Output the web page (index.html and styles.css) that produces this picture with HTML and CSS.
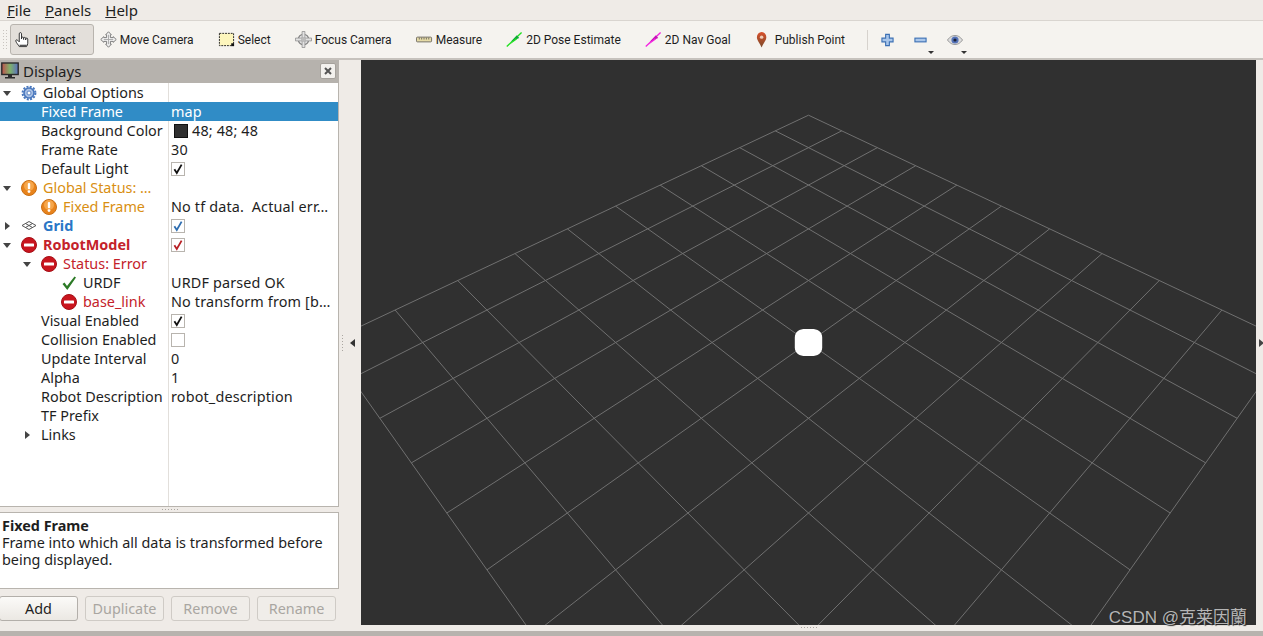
FILE: index.html
```html
<!DOCTYPE html>
<html lang="en">
<head>
    <meta charset="UTF-8">
    <title>RViz</title>
    <link rel="stylesheet" href="styles.css">
</head>
<body>
    <svg class="icon-defs" width="0" height="0">
        <symbol id="i-warn" viewBox="0 0 16 16">
            <circle cx="8" cy="8" r="7.5" fill="#e8831c" stroke="#c96f14" stroke-width="1"/>
            <circle cx="8" cy="6" r="5" fill="#f6a64a"/>
            <rect x="6.8" y="3" width="2.4" height="6.2" rx="1" fill="#fff"/>
            <circle cx="8" cy="11.6" r="1.4" fill="#fff"/>
        </symbol>
        <symbol id="i-error" viewBox="0 0 16 16">
            <circle cx="8" cy="8" r="7.5" fill="#c9151e" stroke="#a50f16" stroke-width="1"/>
            <rect x="3" y="6.4" width="10" height="3.2" rx=".6" fill="#fff"/>
        </symbol>
        <symbol id="i-gear" viewBox="0 0 16 16">
            <circle cx="8" cy="8" r="5" fill="#a9c0e4" stroke="#4a78bd" stroke-width="1.6"/>
            <circle cx="8" cy="8" r="6.4" fill="none" stroke="#4a78bd" stroke-width="2" stroke-dasharray="2 1.35"/>
            <circle cx="8" cy="8" r="2" fill="#fff" stroke="#5f86c4"/>
        </symbol>
        <symbol id="i-grid" viewBox="0 0 16 16">
            <path d="M1 7.500 8 3.500l7 4-7 4ZM4.500 5.500 11.500 9.500M11.500 5.500 4.500 9.500" fill="#fff" stroke="#555" stroke-width="1"/>
        </symbol>
        <symbol id="i-ok" viewBox="0 0 16 16">
            <path d="M1.500 9 3.500 7.500 6 11 13.500 1.500 15 2.500 6.300 15Z" fill="#2c7a26"/>
        </symbol>
        <symbol id="i-tick" viewBox="0 0 12 12">
            <path d="M2.400 6.200 4.800 10 9.600 1.600" fill="none" stroke="currentColor" stroke-width="1.800"/>
        </symbol>
    </svg>

    <div class="app">
        <div class="menubar">
            <span class="menu-item"><u>F</u>ile</span>
            <span class="menu-item"><u>P</u>anels</span>
            <span class="menu-item"><u>H</u>elp</span>
        </div>

        <div class="toolbar">
            <div class="grip"></div>
            <div class="tool tool-active">
                <svg class="tool-icon" viewBox="0 0 18 18"><path d="M4.500 16.500C3.500 14.500 1.200 12.500 .8 10.500c-.2-1.200 1.200-1.500 2-.7L4.500 11.500V3c0-1.800 2.400-1.800 2.400 0V8.500V7.500c0-1.400 2.200-1.400 2.200 0V9V7.800c0-1.400 2.200-1.400 2.200 0V9.500V8.500c0-1.300 2.200-1.300 2.200 0V13c0 1.500-.7 2.500-1.300 3.500Z" fill="#fff" stroke="#2a2a2a" stroke-width="1"/><path d="M4.800 14.500H12.500V16.500H4.800Z" fill="#555"/></svg>
                <span>Interact</span>
            </div>
            <div class="tool">
                <svg class="tool-icon" viewBox="0 0 18 18"><path d="M9 .8 12 4H11V7H14V6L17.200 9 14 12V11H11V14H12L9 17.200 6 14H7V11H4V12L.8 9 4 6V7H7V4H6Z" fill="#f1f1f1" stroke="#777" stroke-width="1"/><path d="M9 4V14M4 9H14" stroke="#aaa" stroke-width="1"/></svg>
                <span>Move Camera</span>
            </div>
            <div class="tool">
                <svg class="tool-icon" viewBox="0 0 18 18"><rect x="1.500" y="2.500" width="15" height="13" fill="#fdf6bd" stroke="#222" stroke-width="1" stroke-dasharray="2 1"/><rect x="14" y="13" width="3" height="3" fill="#111"/></svg>
                <span>Select</span>
            </div>
            <div class="tool">
                <svg class="tool-icon" viewBox="0 0 18 18"><circle cx="9" cy="9" r="5.500" fill="#eee" stroke="#888" stroke-width="1.400"/><path d="M7.500 .5H10.500V17.500H7.500ZM.5 7.500V10.500H17.500V7.500Z" fill="#e2e2e2" stroke="#8c8c8c" stroke-width=".8"/><circle cx="9" cy="9" r="2.500" fill="#bbb"/></svg>
                <span>Focus Camera</span>
            </div>
            <div class="tool">
                <svg class="tool-icon" viewBox="0 0 18 18"><rect x=".5" y="6.500" width="16" height="5" rx="1" fill="#e6dba6" stroke="#6e6a60"/><path d="M3.500 7V9M6 7V9M8.500 7V9M11 7V9M13.500 7V9" stroke="#6e6a60"/></svg>
                <span>Measure</span>
            </div>
            <div class="tool">
                <svg class="tool-icon" viewBox="0 0 18 18"><path d="M.8 16.500 16.500 1.500" stroke="#1fe01f" stroke-width="1.400"/><path d="M5 11.500 11.500 4.500 14 7.500Z" fill="#10a83a"/><path d="M3.500 14.500 10.500 7.500 11.500 9Z" fill="#1fe01f"/></svg>
                <span>2D Pose Estimate</span>
            </div>
            <div class="tool">
                <svg class="tool-icon" viewBox="0 0 18 18"><path d="M.8 16.500 16.500 1.500" stroke="#f41fe0" stroke-width="1.400"/><path d="M5 11.500 11.500 4.500 14 7.500Z" fill="#c415b5"/><path d="M3.500 14.500 10.500 7.500 11.500 9Z" fill="#f41fe0"/></svg>
                <span>2D Nav Goal</span>
            </div>
            <div class="tool tool-pin">
                <svg class="tool-icon" viewBox="0 0 18 18">
                    <defs><linearGradient id="pin-fill" x1="0" x2="0" y1="0" y2="1"><stop offset="0" stop-color="#d9512c"/><stop offset="1" stop-color="#7a4a2a"/></linearGradient></defs>
                    <path d="M7 17.500C5.200 12.500 2 10 2 6.500a5 5.500 0 0 1 10 0C12 10 8.800 12.500 7 17.500Z" fill="url(#pin-fill)"/><circle cx="7" cy="6.500" r="1.800" fill="#f0cdb8"/>
                </svg>
                <span>Publish Point</span>
            </div>
            <div class="tool-sep"></div>
            <div class="mini-tool">
                <svg class="mini-icon" viewBox="0 0 14 14"><path d="M5 1H9V5H13V9H9V13H5V9H1V5H5Z" fill="#a9c6ea" stroke="#3c70b4" stroke-width="1.200"/></svg>
            </div>
            <div class="mini-tool has-caret">
                <svg class="mini-icon" viewBox="0 0 14 14"><rect x="1" y="5" width="12" height="4" fill="#a9c6ea" stroke="#3c70b4" stroke-width="1.200"/></svg>
            </div>
            <div class="mini-tool has-caret">
                <svg class="mini-icon mini-eye" viewBox="0 0 16 14"><path d="M.5 7C3 3.500 5.500 2.500 8 2.500S13 3.500 15.500 7C13 10.500 10.500 11.500 8 11.500S3 10.500 .5 7Z" fill="#ddd" stroke="#999"/><circle cx="8" cy="7" r="3.600" fill="#5472b8"/><circle cx="8" cy="7" r="1.600" fill="#1a2238"/></svg>
            </div>
        </div>

        <div class="main">
            <div class="dock">
                <div class="dock-title">
                    <svg class="dock-icon" viewBox="0 0 18 18">
                        <defs><linearGradient id="screen-fill" x1="0" x2="1" y1="0" y2="0"><stop offset="0" stop-color="#c0504d"/><stop offset=".5" stop-color="#7fb26a"/><stop offset="1" stop-color="#5a6fc0"/></linearGradient></defs>
                        <rect x=".8" y="1" width="16.400" height="11.500" fill="url(#screen-fill)" stroke="#2b2b2b" stroke-width="1.400"/>
                        <path d="M7 13H11V15H14V16.500H4V15H7Z" fill="#2b2b2b"/>
                    </svg>
                    <span class="dock-name">Displays</span>
                    <span class="dock-close">
                        <svg viewBox="0 0 8 8" width="8" height="8"><path d="M1 1 7 7M7 1 1 7" stroke="#555" stroke-width="2"/></svg>
                    </span>
                </div>

                <div class="tree">
                    <div class="row">
                        <div class="cell-name"><i class="arrow down"></i><svg class="row-icon"><use href="#i-gear"/></svg><span>Global Options</span></div>
                        <div class="cell-val"></div>
                    </div>
                    <div class="row selected lvl-1">
                        <div class="cell-name"><i class="arrow"></i><span>Fixed Frame</span></div>
                        <div class="cell-val">map</div>
                    </div>
                    <div class="row lvl-1">
                        <div class="cell-name"><i class="arrow"></i><span>Background Color</span></div>
                        <div class="cell-val"><i class="swatch"></i>48; 48; 48</div>
                    </div>
                    <div class="row lvl-1">
                        <div class="cell-name"><i class="arrow"></i><span>Frame Rate</span></div>
                        <div class="cell-val">30</div>
                    </div>
                    <div class="row lvl-1">
                        <div class="cell-name"><i class="arrow"></i><span>Default Light</span></div>
                        <div class="cell-val"><span class="check"><svg><use href="#i-tick"/></svg></span></div>
                    </div>
                    <div class="row warn">
                        <div class="cell-name"><i class="arrow down"></i><svg class="row-icon"><use href="#i-warn"/></svg><span>Global Status: …</span></div>
                        <div class="cell-val"></div>
                    </div>
                    <div class="row warn lvl-1">
                        <div class="cell-name"><i class="arrow"></i><svg class="row-icon"><use href="#i-warn"/></svg><span>Fixed Frame</span></div>
                        <div class="cell-val">No tf data.&nbsp; Actual err…</div>
                    </div>
                    <div class="row grid-row">
                        <div class="cell-name"><i class="arrow right"></i><svg class="row-icon"><use href="#i-grid"/></svg><span>Grid</span></div>
                        <div class="cell-val"><span class="check check-blue"><svg><use href="#i-tick"/></svg></span></div>
                    </div>
                    <div class="row error strong">
                        <div class="cell-name"><i class="arrow down"></i><svg class="row-icon"><use href="#i-error"/></svg><span>RobotModel</span></div>
                        <div class="cell-val"><span class="check check-red"><svg><use href="#i-tick"/></svg></span></div>
                    </div>
                    <div class="row error lvl-1">
                        <div class="cell-name"><i class="arrow down"></i><svg class="row-icon"><use href="#i-error"/></svg><span>Status: Error</span></div>
                        <div class="cell-val"></div>
                    </div>
                    <div class="row lvl-2">
                        <div class="cell-name"><i class="arrow"></i><svg class="row-icon"><use href="#i-ok"/></svg><span>URDF</span></div>
                        <div class="cell-val">URDF parsed OK</div>
                    </div>
                    <div class="row error lvl-2">
                        <div class="cell-name"><i class="arrow"></i><svg class="row-icon"><use href="#i-error"/></svg><span>base_link</span></div>
                        <div class="cell-val">No transform from [b…</div>
                    </div>
                    <div class="row lvl-1">
                        <div class="cell-name"><i class="arrow"></i><span>Visual Enabled</span></div>
                        <div class="cell-val"><span class="check"><svg><use href="#i-tick"/></svg></span></div>
                    </div>
                    <div class="row lvl-1">
                        <div class="cell-name"><i class="arrow"></i><span>Collision Enabled</span></div>
                        <div class="cell-val"><span class="check"></span></div>
                    </div>
                    <div class="row lvl-1">
                        <div class="cell-name"><i class="arrow"></i><span>Update Interval</span></div>
                        <div class="cell-val">0</div>
                    </div>
                    <div class="row lvl-1">
                        <div class="cell-name"><i class="arrow"></i><span>Alpha</span></div>
                        <div class="cell-val">1</div>
                    </div>
                    <div class="row lvl-1">
                        <div class="cell-name"><i class="arrow"></i><span>Robot Description</span></div>
                        <div class="cell-val">robot_description</div>
                    </div>
                    <div class="row lvl-1">
                        <div class="cell-name"><i class="arrow"></i><span>TF Prefix</span></div>
                        <div class="cell-val"></div>
                    </div>
                    <div class="row lvl-1">
                        <div class="cell-name"><i class="arrow right"></i><span>Links</span></div>
                        <div class="cell-val"></div>
                    </div>
                </div>

                <div class="hsplit"><i class="dots-h"></i></div>

                <div class="help">
                    <b>Fixed Frame</b>
                    <p>Frame into which all data is transformed before being displayed.</p>
                </div>

                <div class="buttons">
                    <span class="btn">Add</span>
                    <span class="btn disabled">Duplicate</span>
                    <span class="btn disabled">Remove</span>
                    <span class="btn disabled">Rename</span>
                </div>
            </div>

            <div class="vsplit"><i class="dots-v"></i><i class="arrow left"></i></div>

            <div class="view-col">
                <div class="viewport">
                    <svg class="scene" viewBox="-447.5 -282.5 895 565">
                        <path class="grid-lines" d="
                            M-482.3 0L0 682M-413.4 -32.500L87.700 558M-350.800 -62L160.800 454.700M-293.600 -89L222.600 367.200
                            M-241.200 -113.700L275.600 292.300M-192.900 -136.400L321.500 227.300M-148.400 -157.400L361.700 170.500
                            M-107.200 -176.800L397.200 120.400M-68.900 -194.900L428.700 75.800M-33.300 -211.700L456.900 35.900M0 -227.300L482.300 0
                            M482.300 0L0 682M413.400 -32.500L-87.700 558M350.800 -62L-160.800 454.700M293.600 -89L-222.600 367.200
                            M241.200 -113.700L-275.600 292.300M192.900 -136.400L-321.500 227.300M148.400 -157.400L-361.700 170.500
                            M107.200 -176.800L-397.200 120.400M68.900 -194.900L-428.700 75.800M33.300 -211.700L-456.900 35.900M0 -227.300L-482.300 0"/>
                        <path class="robot" d="M-3 -13.500H3C9 -13.500 13.700 -11 13.700 -5V5C13.700 11 9 13.500 3 13.500H-3C-9 13.500 -13.700 11 -13.700 5V-5C-13.700 -11 -9 -13.500 -3 -13.500Z"/>
                    </svg>
                </div>
                <i class="dots-h"></i>
            </div>

            <div class="right-strip"><i class="arrow right"></i></div>
            <span class="watermark">CSDN @克莱因蘭</span>
        </div>

        <div class="statusbar"></div>
    </div>
</body>
</html>
```

FILE: styles.css
```css
* {
    margin: 0;
    padding: 0;
    box-sizing: border-box;
}

body {
    font-family: 'Noto Sans', 'Open Sans', sans-serif;
    font-size: 14.4px;
    color: #1e1e1e;
    background: #efebe7;
    overflow: hidden;
}

.icon-defs {
    position: absolute;
}

.app {
    display: flex;
    flex-direction: column;
    height: 636px;
}

/* menu */
.menubar {
    display: flex;
    gap: 14px;
    height: 21px;
    padding: 0 7px;
    font-size: 15px;
    line-height: 20px;
    border-bottom: 1px solid #d9d5d0;
}

/* toolbar */
.toolbar {
    display: flex;
    align-items: center;
    height: 39px;
    padding-left: 2px;
    font-family: Roboto, 'Noto Sans', sans-serif;
    font-size: 12px;
    background: #f5f3ef;
    border-bottom: 2px solid #c6c2bd;
}

.grip {
    width: 5px;
    height: 21px;
    margin-right: 3px;
    background-image: radial-gradient(#c9c5c0 1px, transparent 1px);
    background-size: 3px 3px;
}

.tool {
    display: flex;
    align-items: center;
    gap: 3px;
    height: 31px;
    margin-right: 1px;
    padding: 0 17px 0 4px;
    border: 1px solid transparent;
    border-radius: 3px;
}

.tool-active {
    background: #e3dfda;
    border-color: #b8b4ae;
}

.tool-icon {
    width: 17px;
    height: 17px;
    flex: none;
}

.tool-sep {
    width: 1px;
    height: 20px;
    margin: 0 13px 0 3px;
    background: #d6d2cd;
}

.mini-tool {
    position: relative;
    display: flex;
    align-items: center;
    width: 33px;
    height: 31px;
}

.mini-icon {
    width: 13px;
    height: 14px;
}

.mini-eye {
    width: 16px;
}

.has-caret::after {
    content: "";
    position: absolute;
    left: 14px;
    bottom: 1px;
    border: 3px solid transparent;
    border-top: 3px solid #333;
    border-bottom: 0;
}

/* main area */
.main {
    position: relative;
    display: flex;
    flex: 1;
    min-height: 0;
}

.dock {
    display: flex;
    flex-direction: column;
    width: 339px;
    flex: none;
}

.dock-title {
    display: flex;
    align-items: center;
    height: 23px;
    flex: none;
    padding: 0 3px 1px 1px;
    font-size: 15px;
    background: #b6b2ad;
}

.dock-icon {
    width: 18px;
    height: 18px;
}

.dock-name {
    flex: 1;
    margin-left: 4px;
}

.dock-close {
    display: flex;
    align-items: center;
    justify-content: center;
    width: 16px;
    height: 16px;
    background: #f3f1ee;
    border: 1px solid #a5a19c;
    border-radius: 2px;
}

.tree {
    flex: 1;
    min-height: 0;
    background: linear-gradient(#e2dfdb, #e2dfdb) 168px 0 / 1px 100% no-repeat #fff;
    border-right: 1px solid #b8b4ae;
    border-bottom: 1px solid #b8b4ae;
}

.row {
    display: flex;
    height: 19px;
    line-height: 19px;
}

.cell-name {
    display: flex;
    align-items: center;
    width: 169px;
    flex: none;
    white-space: nowrap;
}

.cell-val {
    display: flex;
    align-items: center;
    padding-left: 2px;
    letter-spacing: .15px;
    white-space: pre;
}

.lvl-1 .cell-name {
    padding-left: 20px;
}

.lvl-2 .cell-name {
    padding-left: 40px;
}

.arrow {
    position: relative;
    display: block;
    width: 21px;
    height: 10px;
    flex: none;
}

.arrow.down::before,
.arrow.right::before,
.arrow.left::before {
    content: "";
    position: absolute;
    top: 1px;
    border: 4px solid transparent;
}

.arrow.down::before {
    left: 3px;
    top: 3px;
    border-top: 5px solid #444;
    border-bottom: 0;
}

.arrow.right::before {
    left: 5px;
    border-left: 5px solid #444;
    border-right: 0;
}

.arrow.left::before {
    left: 0;
    border-right: 5px solid #333;
    border-left: 0;
}

.row-icon {
    width: 16px;
    height: 16px;
    margin-right: 6px;
    flex: none;
}

.selected {
    color: #fff;
    background: #308cc6;
}

.warn .cell-name {
    color: #d98f12;
}

.error .cell-name {
    color: #c4222a;
}

.strong .cell-name,
.grid-row .cell-name {
    font-weight: 700;
}

.grid-row .cell-name {
    color: #2a76c6;
}

.swatch {
    width: 14px;
    height: 14px;
    margin: 0 4px 0 3px;
    background: #303030;
    border: 1px solid #111;
}

.check {
    display: flex;
    align-items: center;
    justify-content: center;
    width: 14px;
    height: 14px;
    color: #111;
    background: #fff;
    border: 1px solid #b8b4ae;
}

.check svg {
    width: 12px;
    height: 12px;
}

.check-blue {
    color: #2f6eb0;
}

.check-red {
    color: #b82025;
}

.hsplit {
    display: flex;
    align-items: center;
    justify-content: center;
    height: 5px;
    flex: none;
}

.dots-h {
    display: block;
    width: 16px;
    height: 1px;
    background-image: linear-gradient(90deg, #aaa6a1 1px, transparent 1px);
    background-size: 3px 1px;
}

.dots-v {
    display: block;
    width: 1px;
    height: 16px;
    background-image: linear-gradient(#aaa6a1 1px, transparent 1px);
    background-size: 1px 3px;
}

.help {
    height: 77px;
    flex: none;
    padding: 4px 2px;
    line-height: 17px;
    background: #fff;
    border: 1px solid #b8b4ae;
    border-left: 0;
}

.buttons {
    display: flex;
    gap: 7px;
    height: 42px;
    flex: none;
    padding-top: 7px;
    margin-left: -1px;
}

.btn {
    width: 79px;
    height: 25px;
    line-height: 23px;
    text-align: center;
    background: linear-gradient(#fbfaf8, #ebe8e3);
    border: 1px solid #b3afaa;
    border-radius: 3px;
}

.btn.disabled {
    color: #a9a6a1;
    background: #f0ede9;
    border-color: #cfcbc6;
}

.vsplit {
    display: flex;
    align-items: center;
    gap: 7px;
    width: 22px;
    height: 565px;
    flex: none;
    padding-left: 3px;
}

.vsplit .arrow {
    width: 5px;
}

.view-col {
    display: flex;
    flex-direction: column;
    align-items: center;
    gap: 2px;
    width: 895px;
    flex: none;
}

.viewport {
    width: 100%;
    height: 565px;
    flex: none;
    background: #303030;
}

.scene {
    display: block;
    width: 100%;
    height: 100%;
}

.grid-lines {
    fill: none;
    stroke: #707070;
    stroke-width: 1;
}

.robot {
    fill: #fff;
}

.right-strip {
    display: flex;
    align-items: center;
    height: 565px;
    flex: 1;
    padding-left: 3px;
}

.right-strip .arrow {
    width: 4px;
}

.right-strip .arrow::before {
    left: 0;
}

.watermark {
    position: absolute;
    right: 16px;
    bottom: 3px;
    font-family: 'Liberation Sans', 'Noto Sans CJK SC', sans-serif;
    font-size: 17px;
    color: #b5b5b5;
    text-shadow: 1px 1px 1px #222;
}

.statusbar {
    height: 5px;
    flex: none;
    background: #b7b3ae;
}
```
